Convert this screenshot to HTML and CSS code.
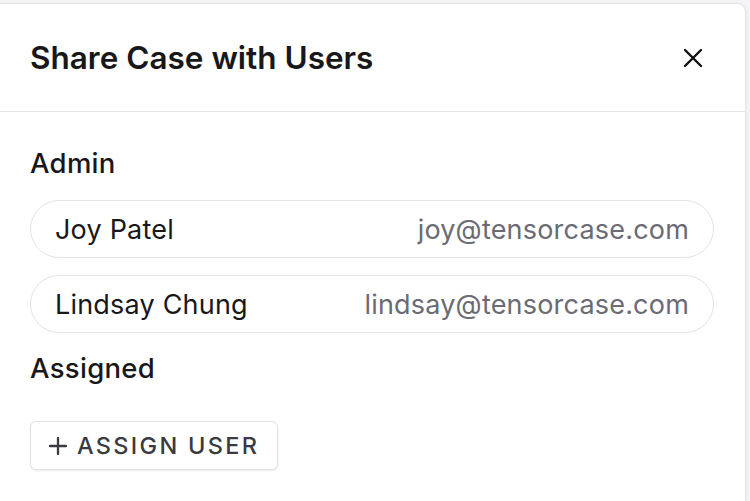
FILE: index.html
```html
<!DOCTYPE html>
<html>
<head>
<meta charset="utf-8">
<link rel="stylesheet" href="styles.css">
</head>
<body>
<div class="modal">
  <div class="modal-header">
    <h1 class="title">Share Case with Users</h1>
    <button class="close" aria-label="Close">
      <svg width="20" height="20" viewBox="0 0 20 20"><path d="M2 2L18 18M18 2L2 18" stroke="#111" stroke-width="2.4" stroke-linecap="round"/></svg>
    </button>
  </div>
  <div class="modal-body">
    <h2 class="section">Admin</h2>
    <div class="user-list">
      <div class="user-row"><span class="name">Joy Patel</span><span class="email">joy@tensorcase.com</span></div>
      <div class="user-row"><span class="name">Lindsay Chung</span><span class="email">lindsay@tensorcase.com</span></div>
    </div>
    <h2 class="section assigned">Assigned</h2>
    <button class="assign-btn"><svg class="plus" width="18" height="18" viewBox="0 0 18 18"><path d="M9 1V17M1 9H17" stroke="#3a3a40" stroke-width="2.3" stroke-linecap="round"/></svg>ASSIGN USER</button>
  </div>
</div>
</body>
</html>
```
FILE: styles.css
```css
html, body {
  margin: 0;
  padding: 0;
  background: #f4f4f7;
  overflow: hidden;
}
body {
  font-family: Inter, "Noto Sans", sans-serif;
  padding-top: 3px;
  padding-right: 4px;
  width: 750px;
  height: 501px;
  box-sizing: border-box;
}
.modal {
  margin-left: -20px;
  background: #fff;
  border: 1.5px solid #e3e3e8;
  border-bottom: 0;
  border-radius: 0 9px 0 0;
  height: 100%;
  box-sizing: border-box;
  box-shadow: 1px 0 3px rgba(0,0,0,0.04);
}
.modal-header {
  display: flex;
  align-items: center;
  justify-content: space-between;
  height: 107px;
  padding: 0 42px 0 49px;
  border-bottom: 1.5px solid #e3e3e8;
}
.title {
  margin: 0;
  font-size: 31.5px;
  font-weight: 600;
  color: #18181b;
}
.close {
  border: 0;
  background: none;
  padding: 0;
  width: 20px;
  height: 20px;
  display: flex;
}
.modal-body {
  padding: 34px 31px 0 49px;
}
.section {
  margin: 0;
  font-size: 27.5px;
  font-weight: 500;
  color: #18181b;
  line-height: 34px;
  letter-spacing: 0.3px;
}
.user-list {
  display: flex;
  flex-direction: column;
  gap: 17px;
  margin-top: 20px;
}
.user-row {
  display: flex;
  justify-content: space-between;
  align-items: center;
  height: 56px;
  border: 1.5px solid #e3e3e8;
  border-radius: 30px;
  padding: 0 24px;
  font-size: 27px;
  letter-spacing: 0.2px;
}
.name { color: #18181b; }
.email { color: #6b6b74; }
.assigned { margin-top: 18px; }
.assign-btn {
  margin-top: 36px;
  display: flex;
  align-items: center;
  height: 49px;
  padding: 0 18px;
  background: #fff;
  border: 1.5px solid #e0e0e6;
  border-radius: 6px;
  box-shadow: 0 1px 2px rgba(0,0,0,0.08);
  font-family: Inter, "Noto Sans", sans-serif;
  font-size: 23.5px;
  font-weight: 500;
  letter-spacing: 2.3px;
  color: #3a3a40;
}
.plus {
  margin-right: 10px;
  flex: none;
}
```
